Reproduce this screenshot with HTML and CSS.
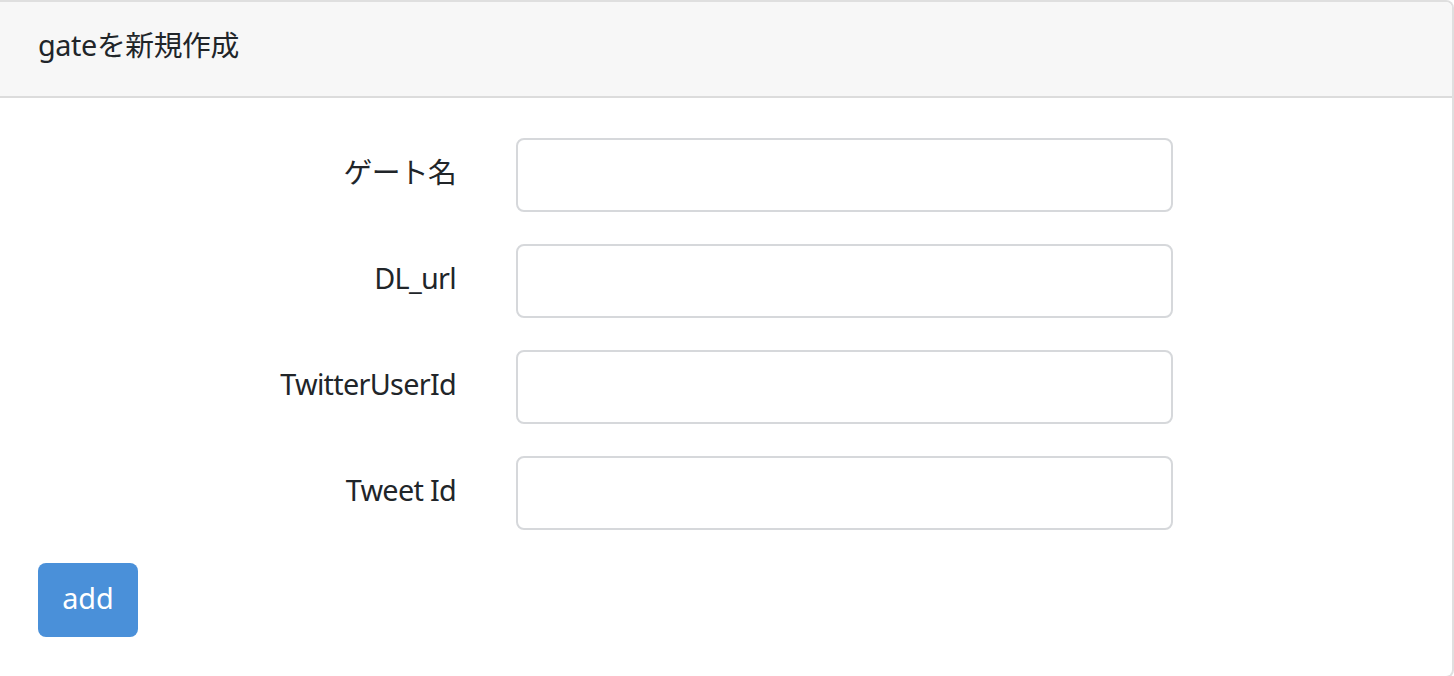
FILE: index.html
```html
<!DOCTYPE html>
<html lang="ja">
<head>
<meta charset="utf-8">
<title>gateを新規作成</title>
<link rel="stylesheet" href="styles.css">
</head>
<body>
<div class="card">
  <div class="card-header">gateを新規作成</div>
  <div class="card-body">
    <form class="form">
      <div class="form-row">
        <label class="form-label" for="name">ゲート名</label>
        <input class="form-input" id="name" type="text">
      </div>
      <div class="form-row">
        <label class="form-label" for="dl">DL_url</label>
        <input class="form-input" id="dl" type="text">
      </div>
      <div class="form-row">
        <label class="form-label" for="uid">TwitterUserId</label>
        <input class="form-input" id="uid" type="text">
      </div>
      <div class="form-row">
        <label class="form-label" for="tid">Tweet Id</label>
        <input class="form-input" id="tid" type="text">
      </div>
      <button class="btn-primary" type="button">add</button>
    </form>
  </div>
</div>
</body>
</html>
```

FILE: styles.css
```css
* { box-sizing: border-box; }
html, body { margin: 0; padding: 0; }
body {
  font-family: "Noto Sans", "Noto Sans CJK JP", sans-serif;
  font-size: 28.8px;
  line-height: 1.6;
  color: #212529;
  background: #ffffff;
  height: 676px;
  overflow: hidden;
}
.card {
  border: 2px solid #dfdfdf;
  border-left: 0;
  border-radius: 0 8px 8px 0;
  height: 678px;
  background: #fff;
}
.card-header {
  background: #f7f7f7;
  border-bottom: 2px solid #dcdcdc;
  padding: 20px 38px 26px;
  height: 96px;
  border-radius: 0 6px 0 0;
  letter-spacing: -0.4px;
}
.card-body {
  padding: 40px 38px;
}
.form-row {
  display: flex;
  align-items: center;
  gap: 60px;
  margin-bottom: 32px;
}
.form-label {
  width: 418px;
  text-align: right;
  letter-spacing: -0.7px;
  padding-bottom: 5px;
}
.form-input {
  width: 657px;
  height: 74px;
  border: 2px solid #d6d8db;
  border-radius: 8px;
  background: #fff;
  font: inherit;
  padding: 0 24px;
}
.btn-primary {
  display: block;
  height: 74px;
  width: 100px;
  border: 0;
  border-radius: 8px;
  background: #4a90d9;
  color: #fff;
  font: inherit;
  padding: 0 0 4px;
  margin-top: 33px;
}
```
